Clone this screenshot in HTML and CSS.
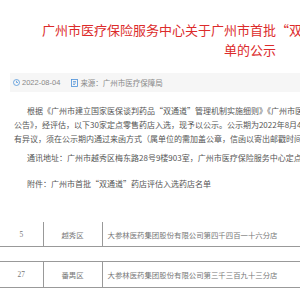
FILE: index.html
```html
<!DOCTYPE html>
<html lang="zh-CN">
<head>
    <meta charset="UTF-8">
    <meta name="viewport" content="width=device-width, initial-scale=1.0">
    <title>广州市首批“双通道”药店评估入选药店名单的公示</title>
    <link rel="stylesheet" href="styles.css">
</head>
<body>

    <div class="article">
        <h1 class="title">广州市医疗保险服务中心关于广州市首批“双通道”药店评估入选药店名单的公示</h1>

        <!-- date and source -->
        <div class="meta">
            <span class="meta-item">
                <svg class="icon" width="7" height="7" viewBox="0 0 14 14">
                    <circle cx="7" cy="7" r="6" fill="none" stroke="#4a90d9" stroke-width="1.5"/>
                    <path d="M7 3.5V7h3" fill="none" stroke="#4a90d9" stroke-width="1.5"/>
                </svg>
                2022-08-04
            </span>
            <span class="meta-item">
                <svg class="icon" width="7" height="8" viewBox="0 0 14 16">
                    <rect x="1" y="1" width="12" height="14" fill="none" stroke="#4a90d9" stroke-width="1.6"/>
                    <path d="M4 5h6M4 8h6M4 11h4" stroke="#4a90d9" stroke-width="1.4"/>
                </svg>
                来源：广州市医疗保障局
            </span>
        </div>

        <div class="content">
            <p>根据《广州市建立国家医保谈判药品“双通道”管理机制实施细则》《广州市医疗保障局关于开展“双通道”药店评估工作的<br>公告》，经评估，以下30家定点零售药店入选，现予以公示。公示期为2022年8月4日至8月10日，如对公示内容<br>有异议，须在公示期内通过来函方式（属单位的需加盖公章，信函以寄出邮戳时间为准）向我中心反映。</p>
            <p>通讯地址：广州市越秀区梅东路28号9楼903室，广州市医疗保险服务中心定点管理科（收）。</p>
            <p class="attach">附件：广州市首批“双通道”药店评估入选药店名单</p>

            <table class="list">
                <colgroup>
                    <col class="col-no">
                    <col class="col-area">
                    <col class="col-name">
                </colgroup>
                <tr class="row-first">
                    <td>5</td>
                    <td>越秀区</td>
                    <td class="name">大参林医药集团股份有限公司第四千四百一十六分店</td>
                </tr>
                <tr class="row-gap">
                    <td colspan="3"></td>
                </tr>
                <tr class="row-full">
                    <td>27</td>
                    <td>番禺区</td>
                    <td class="name">大参林医药集团股份有限公司第三千三百九十三分店</td>
                </tr>
            </table>
        </div>
    </div>

</body>
</html>
```

FILE: styles.css
```css
body {
    margin: 0;
    background-color: #fff;
    font-family: "Noto Sans CJK SC", sans-serif;
}
.article {
    width: 480px;
    margin-left: 10px;
}
.title {
    margin: 0;
    padding: 20px 29px 13px;
    font-size: 13px;
    font-weight: normal;
    line-height: 20px;
    color: #dc2b2b;
    text-align: center;
}
.meta {
    display: flex;
    align-items: center;
    gap: 11px;
    height: 19px;
    padding-left: 3px;
    background-color: #f6f6f6;
    font-family: "Liberation Sans", "Noto Sans CJK SC", sans-serif;
    font-size: 7.5px;
    color: #888;
}
.meta-item {
    display: flex;
    align-items: center;
    gap: 2px;
}
.icon {
    display: block;
}
.content {
    padding: 12px 4px 0;
}
.content p {
    margin: 0 0 5px;
    font-family: "Noto Sans CJK SC", serif;
    font-size: 8px;
    line-height: 14px;
    color: #555;
    text-indent: 13px;
    white-space: nowrap;
}
.content p.attach {
    margin-top: 12px;
}
.list {
    width: 520px;
    margin: 31px 0 0 -14px;
    border-collapse: collapse;
    table-layout: fixed;
    font-family: "Liberation Serif", "Noto Sans CJK SC", serif;
    font-size: 7.4px;
    color: #777;
}
.col-no {
    width: 43px;
}
.col-area {
    width: 59px;
}
.list td {
    padding: 0;
    text-align: center;
    border-left: 1px solid #999;
}
.list td:first-child {
    border-left: none;
}
.list td.name {
    padding-left: 5px;
    text-align: left;
}
.row-first td {
    height: 24px;
    border-bottom: 1px solid #999;
}
.row-gap td {
    height: 14px;
    border-left: none;
}
.row-full td {
    height: 25px;
    border-top: 1px solid #999;
    border-bottom: 1px solid #999;
}
```
